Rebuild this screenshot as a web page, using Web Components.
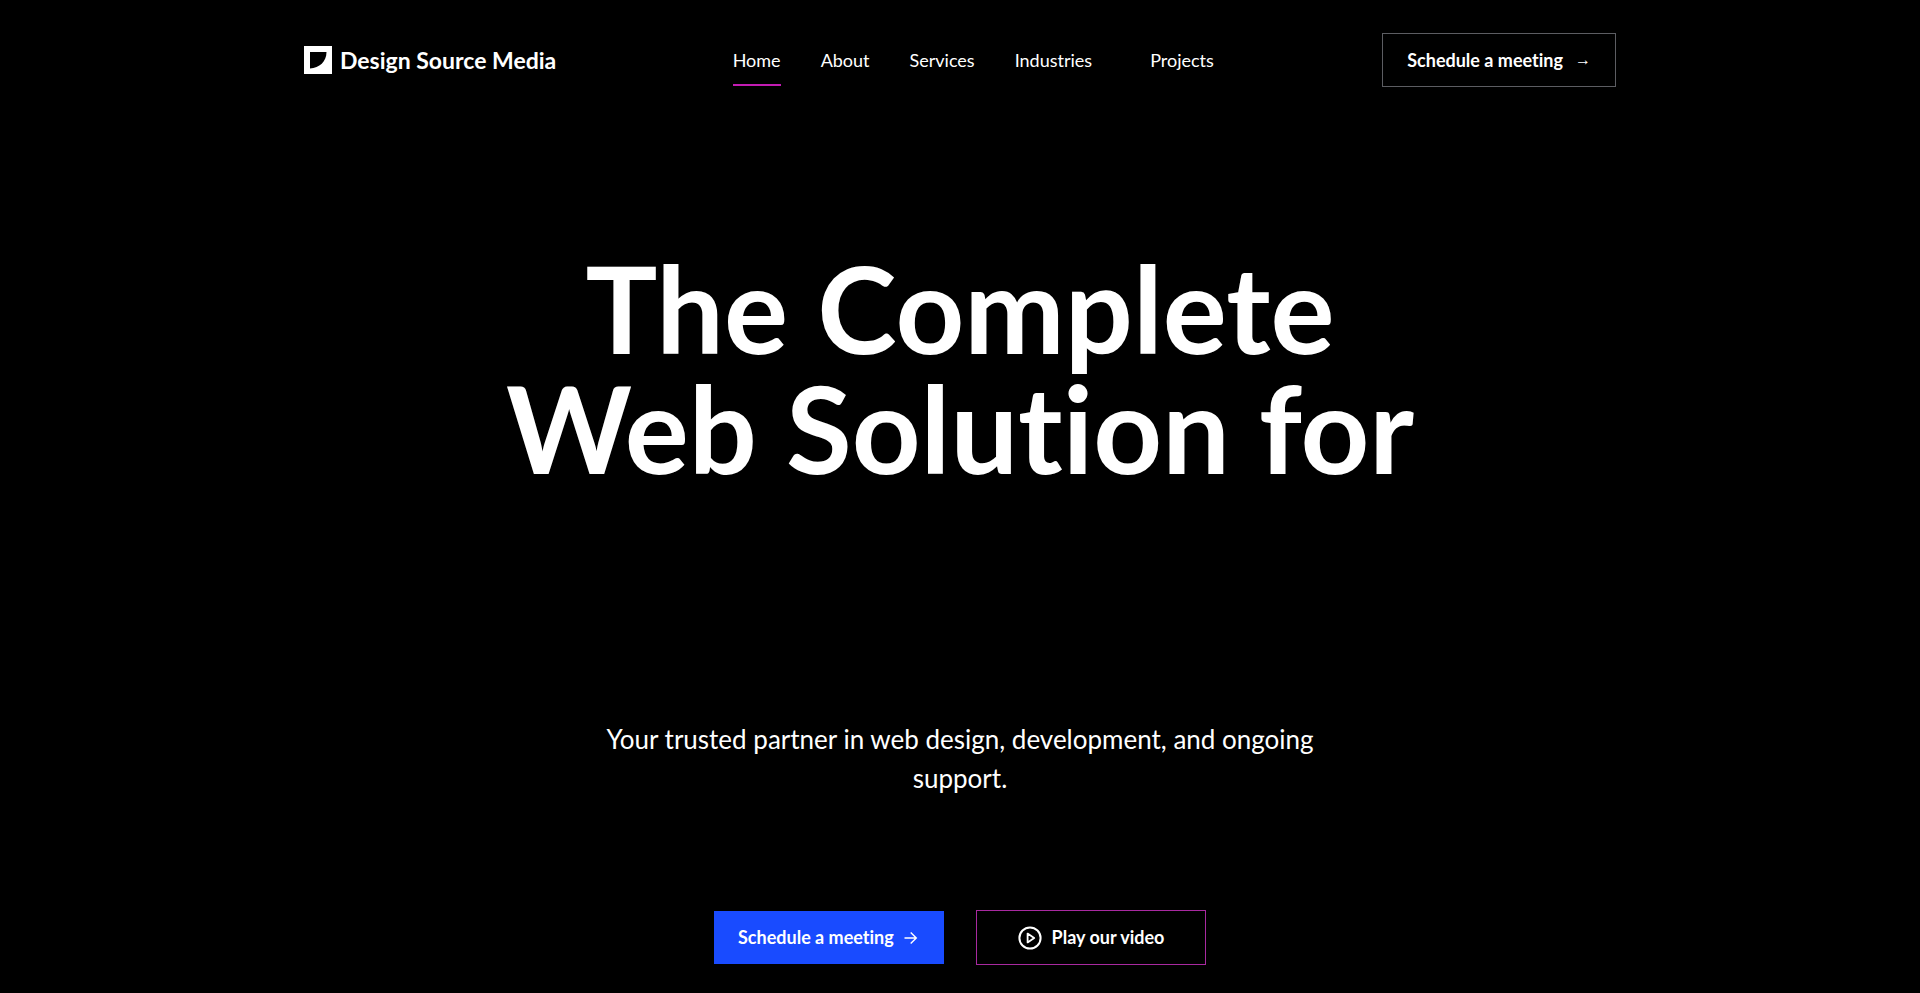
<!DOCTYPE html>
<html lang="en">
<head>
  <meta charset="utf-8">
  <meta name="viewport" content="width=device-width, initial-scale=1">
  <title>Design Source Media</title>
  <style>
    :root {
      --color-bg: #000;
      --color-text: #fff;
      --color-blue: #194bff;
      --color-magenta: #c31cb3;
      --color-magenta-dark: #a8299f;
      --color-grey: #5c5d62;
    }

    body {
      margin: 0;
      background: var(--color-bg);
      color: var(--color-text);
      font-family: Lato, "Liberation Sans", sans-serif;
      font-size: 18px;
      font-variant-ligatures: none;
      line-height: 24px;
    }
  </style>
</head>
<body>
  <site-header>
    <site-logo slot="logo">Design Source Media</site-logo>
    <nav-link href="#home" current>Home</nav-link>
    <nav-link href="#about">About</nav-link>
    <nav-link href="#services">Services</nav-link>
    <nav-link href="#industries" menu>Industries</nav-link>
    <nav-link href="#projects">Projects</nav-link>
    <action-button slot="action" variant="outline">Schedule a meeting<span slot="end">→</span></action-button>
  </site-header>

  <hero-section>
    <span slot="title">The Complete<br>Web Solution for</span>
    <span slot="text">Your trusted partner in web design, development, and ongoing support.</span>
    <action-button variant="primary">
      Schedule a meeting
      <svg slot="end" width="14" height="14" viewBox="0 0 14 14" fill="none" stroke="currentColor" stroke-width="1.4" aria-hidden="true">
        <path d="M.5 7h11.5M6.700 1.400L12.300 7l-5.600 5.600"/>
      </svg>
    </action-button>
    <action-button variant="accent">
      <svg slot="start" width="24" height="24" viewBox="0 0 24 24" fill="none" stroke="currentColor" stroke-width="2" stroke-linejoin="round" aria-hidden="true">
        <circle cx="12" cy="12" r="10.6"/>
        <path d="M9.600 7.600v8.800l6.600-4.400z" stroke-width="1.8"/>
      </svg>
      Play our video
    </action-button>
  </hero-section>

  <script>
    class SiteLogo extends HTMLElement {
      constructor() {
        super();
        const template = document.createElement('template');
        template.innerHTML = `
          <style>
          :host {
            display: block;
            margin-right: 8px;
          }

          .logo {
            display: flex;
            align-items: center;
            gap: 8px;
            color: inherit;
            font-size: 23px;
            font-weight: 700;
            line-height: 28px;
            text-decoration: none;
            white-space: nowrap;
          }

          .logo__mark {
            flex: none;
          }
          </style>
          <a class="logo" href="#home">
            <svg class="logo__mark" width="28" height="28" viewBox="0 0 28 28" aria-hidden="true">
              <path fill="currentColor" fill-rule="evenodd" d="M0 0h28v28H0zM6 6v16.5C15.5 22 22.5 15.5 22.5 6z"/>
            </svg>
            <slot></slot>
          </a>
        `;
        this.attachShadow({ mode: 'open' });
        this.shadowRoot.appendChild(template.content.cloneNode(true));
      }
    }

    class NavLink extends HTMLElement {
      constructor() {
        super();
        const template = document.createElement('template');
        template.innerHTML = `
          <style>
          :host {
            display: block;
          }

          :host([menu]) {
            padding-right: 18px;
          }

          .link {
            display: block;
            padding: 14px 0 12px;
            border-bottom: 2px solid transparent;
            color: inherit;
            text-decoration: none;
          }

          .link:hover,
          :host([current]) .link {
            border-color: var(--color-magenta);
          }
          </style>
          <a class="link"><slot></slot></a>
        `;
        this.attachShadow({ mode: 'open' });
        this.shadowRoot.appendChild(template.content.cloneNode(true));
      }

      connectedCallback() {
        const link = this.shadowRoot.querySelector('.link');
        link.href = this.getAttribute('href');
        if (this.hasAttribute('current')) {
          link.setAttribute('aria-current', 'page');
        }
      }
    }

    class ActionButton extends HTMLElement {
      constructor() {
        super();
        const template = document.createElement('template');
        template.innerHTML = `
          <style>
          :host {
            display: block;
          }

          .button {
            display: flex;
            align-items: center;
            justify-content: center;
            gap: 12px;
            box-sizing: border-box;
            width: 100%;
            padding: 14px 24px;
            border: 1px solid var(--color-grey);
            background: transparent;
            color: inherit;
            font: inherit;
            font-variant-ligatures: none;
            font-weight: 700;
            white-space: nowrap;
            cursor: pointer;
          }

          :host([variant="primary"]) .button {
            gap: 10px;
            padding: 13px 23px;
            border-color: var(--color-blue);
            background: var(--color-blue);
            justify-content: flex-start;
            line-height: 25px;
          }

          :host([variant="accent"]) .button {
            gap: 10px;
            border-color: var(--color-magenta-dark);
            line-height: 25px;
          }

          ::slotted(span[slot="end"]) {
            font-family: "Liberation Sans", sans-serif;
            font-size: 16px;
            font-weight: 400;
          }
          </style>
          <button class="button" type="button">
            <slot name="start"></slot>
            <span><slot></slot></span>
            <slot name="end"></slot>
          </button>
        `;
        this.attachShadow({ mode: 'open' });
        this.shadowRoot.appendChild(template.content.cloneNode(true));
      }
    }

    class SiteHeader extends HTMLElement {
      constructor() {
        super();
        const template = document.createElement('template');
        template.innerHTML = `
          <style>
          :host {
            display: block;
          }

          .header {
            display: flex;
            align-items: center;
            justify-content: space-between;
            box-sizing: border-box;
            max-width: 1312px;
            min-height: 120px;
            margin: 0 auto;
          }

          .header__nav {
            display: flex;
            gap: 40px;
          }
          </style>
          <header class="header">
            <slot name="logo"></slot>
            <nav class="header__nav" aria-label="Main"><slot></slot></nav>
            <slot name="action"></slot>
          </header>
        `;
        this.attachShadow({ mode: 'open' });
        this.shadowRoot.appendChild(template.content.cloneNode(true));
      }
    }

    class HeroSection extends HTMLElement {
      constructor() {
        super();
        const template = document.createElement('template');
        template.innerHTML = `
          <style>
          :host {
            display: block;
          }

          .hero {
            display: flex;
            flex-direction: column;
            align-items: center;
            padding: 128px 24px 24px;
            text-align: center;
          }

          .hero__title {
            min-height: 360px;
            margin: 0;
            font-size: 120px;
            font-weight: 700;
            line-height: 120px;
          }

          .hero__text {
            max-width: 736px;
            margin: 112px 0;
            font-size: 26px;
            line-height: 39px;
          }

          .hero__actions {
            display: grid;
            grid-template-columns: 230px 230px;
            align-items: center;
            gap: 32px;
          }
          </style>
          <section class="hero">
            <h1 class="hero__title"><slot name="title"></slot></h1>
            <p class="hero__text"><slot name="text"></slot></p>
            <div class="hero__actions"><slot></slot></div>
          </section>
        `;
        this.attachShadow({ mode: 'open' });
        this.shadowRoot.appendChild(template.content.cloneNode(true));
      }
    }

    customElements.define('site-logo', SiteLogo);
    customElements.define('nav-link', NavLink);
    customElements.define('action-button', ActionButton);
    customElements.define('site-header', SiteHeader);
    customElements.define('hero-section', HeroSection);
  </script>
</body>
</html>
